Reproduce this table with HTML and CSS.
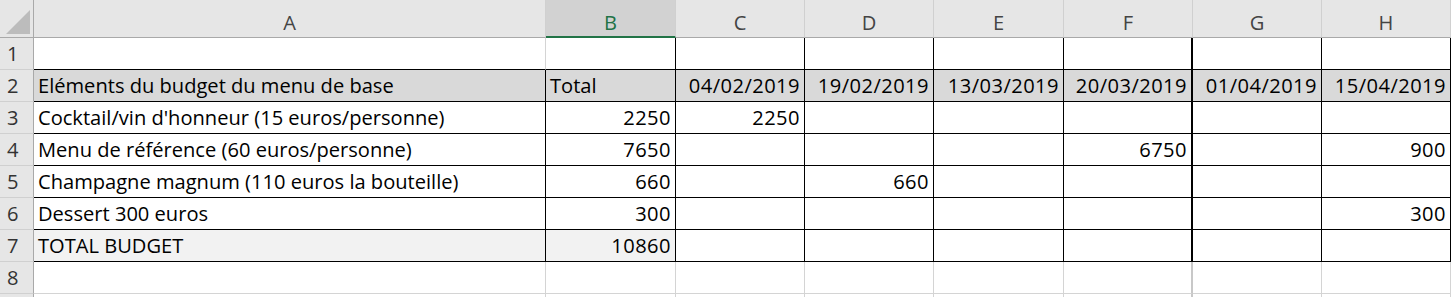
FILE: index.html
```html
<!DOCTYPE html>
<html lang="fr">
<head>
<meta charset="utf-8">
<title>Budget</title>
<link rel="stylesheet" href="styles.css">
</head>
<body>
<div class="sheet">
  <div class="hd corner"><span class="tri"></span></div>
  <div class="hd col">A</div>
  <div class="hd col sel">B</div>
  <div class="hd col">C</div>
  <div class="hd col">D</div>
  <div class="hd col">E</div>
  <div class="hd col">F</div>
  <div class="hd col">G</div>
  <div class="hd col">H</div>

  <div class="rh">1</div>
  <div class="c bb"></div>
  <div class="c bx"></div>
  <div class="c bx"></div>
  <div class="c bx"></div>
  <div class="c bx"></div>
  <div class="c bx thick"></div>
  <div class="c bx"></div>
  <div class="c bx"></div>

  <div class="rh">2</div>
  <div class="c bx g2">Eléments du budget du menu de base</div>
  <div class="c bx g2">Total</div>
  <div class="c bx g2 r">04/02/2019</div>
  <div class="c bx g2 r">19/02/2019</div>
  <div class="c bx g2 r">13/03/2019</div>
  <div class="c bx g2 r thick">20/03/2019</div>
  <div class="c bx g2 r">01/04/2019</div>
  <div class="c bx g2 r">15/04/2019</div>

  <div class="rh">3</div>
  <div class="c bx">Cocktail/vin d'honneur (15 euros/personne)</div>
  <div class="c bx r">2250</div>
  <div class="c bx r">2250</div>
  <div class="c bx"></div>
  <div class="c bx"></div>
  <div class="c bx thick"></div>
  <div class="c bx"></div>
  <div class="c bx"></div>

  <div class="rh">4</div>
  <div class="c bx">Menu de référence (60 euros/personne)</div>
  <div class="c bx r">7650</div>
  <div class="c bx"></div>
  <div class="c bx"></div>
  <div class="c bx"></div>
  <div class="c bx r thick">6750</div>
  <div class="c bx"></div>
  <div class="c bx r">900</div>

  <div class="rh">5</div>
  <div class="c bx">Champagne magnum (110 euros la bouteille)</div>
  <div class="c bx r">660</div>
  <div class="c bx"></div>
  <div class="c bx r">660</div>
  <div class="c bx"></div>
  <div class="c bx thick"></div>
  <div class="c bx"></div>
  <div class="c bx"></div>

  <div class="rh">6</div>
  <div class="c bx">Dessert 300 euros</div>
  <div class="c bx r">300</div>
  <div class="c bx"></div>
  <div class="c bx"></div>
  <div class="c bx"></div>
  <div class="c bx thick"></div>
  <div class="c bx"></div>
  <div class="c bx r">300</div>

  <div class="rh">7</div>
  <div class="c bx g7">TOTAL BUDGET</div>
  <div class="c bx g7 r">10860</div>
  <div class="c bx"></div>
  <div class="c bx"></div>
  <div class="c bx"></div>
  <div class="c bx thick"></div>
  <div class="c bx"></div>
  <div class="c bx"></div>

  <div class="rh">8</div>
  <div class="c"></div>
  <div class="c"></div>
  <div class="c"></div>
  <div class="c"></div>
  <div class="c"></div>
  <div class="c thickg"></div>
  <div class="c"></div>
  <div class="c"></div>

  <div class="rh"></div>
  <div class="c"></div>
  <div class="c"></div>
  <div class="c"></div>
  <div class="c"></div>
  <div class="c"></div>
  <div class="c thickg"></div>
  <div class="c"></div>
  <div class="c"></div>
</div>
</body>
</html>
```

FILE: styles.css
```css
html, body {
  margin: 0;
  padding: 0;
  background: #ffffff;
  overflow: hidden;
}

.sheet {
  display: grid;
  grid-template-columns: 34px 512px 130px 129px 129px 130px 129px 129px 129px;
  grid-template-rows: 38px repeat(9, 32px);
  font-family: "Open Sans", "Liberation Sans", sans-serif;
  font-size: 20.1px;
  color: #000;
  width: 1451px;
}

.hd {
  background: #e6e6e6;
  border-right: 1px solid #d0d0d0;
  border-bottom: 1px solid #a9a9a9;
  color: #444;
  display: flex;
  align-items: center;
  justify-content: center;
  padding-top: 9px;
  line-height: 26px;
}

.corner {
  position: relative;
  border-right: 1px solid #a9a9a9;
}

.tri {
  position: absolute;
  right: 3px;
  bottom: 3px;
  width: 0;
  height: 0;
  border-left: 24px solid transparent;
  border-bottom: 24px solid #bcbcbc;
}

.hd.sel {
  background: #d2d2d2;
  color: #217346;
  border-bottom: 2px solid #217346;
}

.rh {
  background: #e6e6e6;
  border-right: 1px solid #a9a9a9;
  border-bottom: 1px solid #d0d0d0;
  color: #333;
  display: flex;
  align-items: flex-end;
  padding-left: 7px;
  padding-bottom: 2px;
  line-height: 26px;
}

.c {
  border-right: 1px solid #d4d4d4;
  border-bottom: 1px solid #d4d4d4;
  display: flex;
  align-items: flex-end;
  padding: 0 4px 2px 4px;
  line-height: 26px;
  white-space: nowrap;
  overflow: hidden;
}

.c.bb {
  border-bottom-color: #000;
}

.c.bx {
  border-right-color: #000;
  border-bottom-color: #000;
}

.c.r {
  justify-content: flex-end;
  letter-spacing: 0.45px;
  padding-right: 4px;
}

.c.thick {
  border-right: 2px solid #000;
}

.c.thickg {
  border-right: 2px solid #c8c8c8;
}

.c.g2 {
  background: #d9d9d9;
}

.c.g7 {
  background: #f2f2f2;
}
```
